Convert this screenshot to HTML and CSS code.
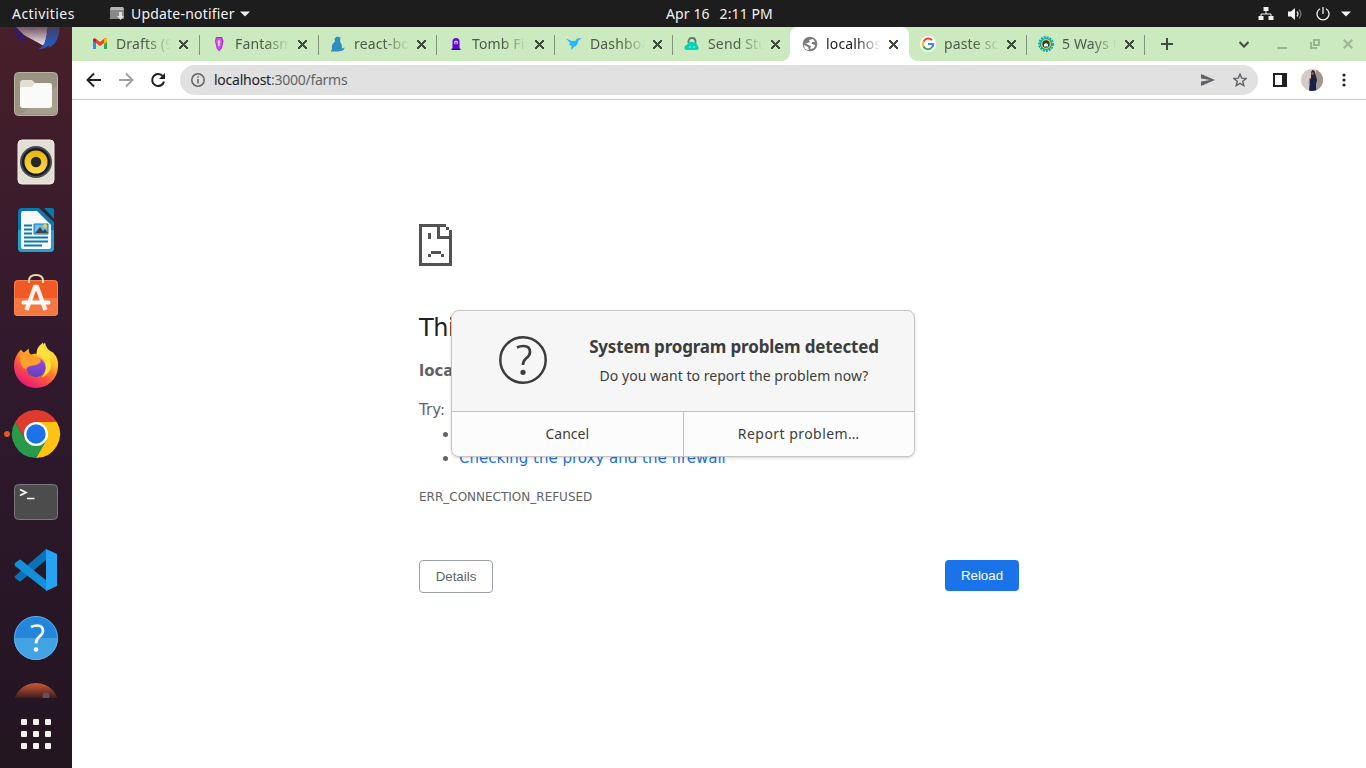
FILE: index.html
```html
<!DOCTYPE html>
<html lang="en">
<head>
<meta charset="utf-8">
<title>localhost</title>
<link rel="stylesheet" href="styles.css">
</head>
<body>
<header class="topbar">
  <span class="activities">Activities</span>
  <svg class="app-icon" width="16" height="16" viewBox="0 0 16 16"><path d="M2 1h12l1 3v9H1V4z" fill="#aaa"/><path d="M1 4h14v9H1z" fill="#888"/><path d="M2 1h12l1 3H1z" fill="#b5b5b5"/><path d="M10 6h3v4h2l-3.500 4L8 10h2z" fill="#ddd"/></svg>
  <span class="app-name">Update-notifier</span>
  <svg class="caret" width="10" height="6" viewBox="0 0 10 6"><path d="M0 .5h10L5 5.500z" fill="#f2f2f2"/></svg>
  <span class="clock"><span>Apr 16</span><span>2:11 PM</span></span>
  <span class="tray">
    <svg width="16" height="14" viewBox="0 0 16 14"><path d="M5.500 0h5v4h-5zM.5 9h5v4h-5zM10.500 9h5v4h-5z" fill="#f2f2f2"/><path d="M8 4v3M3 9V7h10v2" fill="none" stroke="#f2f2f2"/></svg>
    <svg width="16" height="14" viewBox="0 0 16 14"><path d="M1 4.500h3L8 1v12L4 9.500H1z" fill="#f2f2f2"/><path d="M10 4.500q2 2.500 0 5" fill="none" stroke="#ddd" stroke-width="1.300"/><path d="M12 2.500q4 4.500 0 9" fill="none" stroke="#777" stroke-width="1.300"/></svg>
    <svg width="14" height="14" viewBox="0 0 14 14"><path d="M4 1.700a6 6 0 1 0 6 0M7 0v7" fill="none" stroke="#f2f2f2" stroke-width="1.300"/></svg>
    <svg width="10" height="6" viewBox="0 0 10 6"><path d="M0 .5h10L5 5.500z" fill="#f2f2f2"/></svg>
  </span>
</header>
<div class="desktop">
  <nav class="dock">
    <div class="dock-list">
      <svg viewBox="0 0 48 48"><defs><linearGradient id="tb" gradientUnits="userSpaceOnUse" x1="0" y1="24" x2="0" y2="44"><stop stop-color="#6d4c58"/><stop offset="1" stop-color="#f2eef2"/></linearGradient><linearGradient id="tc" gradientUnits="userSpaceOnUse" x1="0" y1="24" x2="0" y2="40"><stop stop-color="#4a3a5c"/><stop offset="1" stop-color="#2c56b4"/></linearGradient></defs><path d="M3 24l9 9 20 11 5-20z" fill="url(#tb)"/><path d="M14 25l6 3 8-3" fill="none" stroke="#75606e"/><path d="M1 26q3 12 13 15-2-3-2-7L3 25z" fill="#301c6c"/><path d="M36 24h11.500q0 17-11 22l1-3q-4 4-11 4 4-2 6-6 3-6 2-12z" fill="url(#tc)"/></svg>
      <svg viewBox="0 0 48 48"><rect x="2.500" y="2.500" width="43" height="43" rx="4" fill="#9a9282" stroke="#b8b3a0"/><path d="M10 44h32l3-3V16z" fill="#a79f8e"/><path d="M8 13q0-3 3-3h9l3 3h14q3 0 3 3v7H8z" fill="#e2dfd3"/><path d="M8 19q0-2 2-2h10l3-4h14q3 0 3 3v19q0 3-3 3H11q-3 0-3-3z" fill="#fafaf9"/></svg>
      <svg viewBox="0 0 48 48"><defs><linearGradient id="ye" x2="0" y2="1"><stop stop-color="#e8b40b"/><stop offset="1" stop-color="#ffdb50"/></linearGradient></defs><rect x="6" y="2" width="36" height="44" rx="4" fill="#e3dfd5" stroke="#f1eee8"/><circle cx="24" cy="24" r="16" fill="#4b4c50"/><circle cx="24" cy="24" r="14" fill="#171c28"/><circle cx="24" cy="24" r="11.500" fill="url(#ye)"/><circle cx="24" cy="24" r="5.200" fill="#252829"/></svg>
      <svg viewBox="0 0 48 48"><path d="M10 2h17l15 14v26q0 4-4 4H10q-4 0-4-4V6q0-4 4-4z" fill="#0878ad"/><path d="M6 24h36v18q0 4-4 4H10q-4 0-4-4z" fill="#279dd0"/><path d="M10 5h15l14 14v22q0 2-2 2H11q-2 0-2-2V7z" fill="#fafafa"/><path d="M32 2h8q2 0 2 2v9z" fill="#0878ad"/><path d="M12 19.500h8M12 23.500h8M12 27.500h8M12 31.500h24M12 35.500h24M12 39.500h18" stroke="#0779b3" stroke-width="2"/><path d="M22 18h14v10H22z" fill="#70bcec" stroke="#0779b3"/><path d="M23 27l5-6 3 4 2-2 3 4z" fill="#444"/><circle cx="33" cy="20" r="2" fill="#f9cf27"/></svg>
      <svg viewBox="0 0 48 48"><path d="M17 9V7q0-6 7-6t7 6v2" fill="none" stroke="#f4d6ad" stroke-width="2"/><rect x="2" y="6" width="44" height="36" rx="4" fill="#f15a24"/><path d="M2 24h44v14q0 4-4 4H6q-4 0-4-4z" fill="#f47840"/><rect x="2.500" y="6.500" width="43" height="35" rx="4" fill="none" stroke="#f58b59" stroke-width=".8"/><path d="M17 9V6M31 9V6" stroke="#f8d8ad" stroke-width="2"/><path d="M14.500 36L23 13h2l8.500 23" fill="none" stroke="#fff1e9" stroke-width="4.300"/><path d="M11.500 28.500h25" stroke="#fff" stroke-width="4" stroke-linecap="round"/></svg>
      <svg viewBox="0 0 48 48"><defs><linearGradient id="ff" x1=".9" x2=".3" y2="1"><stop stop-color="#fff44f"/><stop offset=".35" stop-color="#ffbf25"/><stop offset=".65" stop-color="#ff5b3b"/><stop offset="1" stop-color="#e5147c"/></linearGradient><linearGradient id="pu" x2="0" y2="1"><stop stop-color="#a646e9"/><stop offset="1" stop-color="#5944bb"/></linearGradient></defs><g transform="translate(0 -1.500)"><path d="M9 9q1 2 3 3l5-4q-1 4 2 6 7-2 9 0 1-8 5-12 1 7 8 10 6 6 5 14A22 22 0 0 1 2 25q0-9 7-16z" fill="url(#ff)"/><circle cx="24" cy="27" r="9.700" fill="url(#pu)"/><path d="M8 15q3-3 9 2h6q5 0 6 4-3 4-9 4-5 1-6 4Q7 26 8 15z" fill="#ffa02b"/><path d="M31 2q-8 6-6 13 9 1 9 13-1 6-5 9 9-3 10-12 0-5-3-8 3 0 5 4-1-6-4-9-5-4-6-10z" fill="#ffe13e"/></g></svg>
      <svg class="active" viewBox="0 0 48 48"><path d="M24 12h20.800A24 24 0 0 0 3.200 12l10.400 18L24 24z" fill="#df3a2e"/><path d="M24 12h20.800A24 24 0 0 1 24 48l10.400-18z" fill="#fcc30f"/><path d="M3.200 12A24 24 0 0 0 24 48l10.400-18L24 34 13.600 30z" fill="#299a49"/><circle cx="24" cy="24" r="12" fill="#fff"/><circle cx="24" cy="24" r="9.700" fill="#1a73e8"/></svg>
      <svg viewBox="0 0 48 48"><rect x="2.500" y="6.500" width="43" height="35" rx="4" fill="#4b4c4b" stroke="#797979"/><path d="M8 11.500l6 3-6 3M15 20.500h7.500" fill="none" stroke="#fff" stroke-width="1.700"/></svg>
      <svg viewBox="0 0 48 48"><path d="M3 30L34 3v11L9 35q-1 1-2 0l-4-3q-1-1 0-2z" fill="#0873b7"/><path d="M3 17l4-3q1-1 2 0l26 21v10L3 20q-1-2 0-3z" fill="#148fd9"/><path d="M34 3l11 5v32l-11 5z" fill="#26a4f3"/></svg>
      <svg viewBox="0 0 48 48"><circle cx="24" cy="24" r="22" fill="#2386da"/><path d="M2 26h44a22 22 0 0 1-44 0z" transform="translate(0 -2)" fill="#43a2e3"/><circle cx="24" cy="24" r="21.500" fill="none" stroke="#65b6ee" stroke-width=".8"/><path d="M19 13q3-1.500 6-1.500 6 0 6 5.500 0 3-4 6-3 2.500-3 6.500" fill="none" stroke="#fff" stroke-width="2.700"/><circle cx="24" cy="35.500" r="2.300" fill="#fff"/></svg>
      <svg viewBox="0 0 48 48"><defs><linearGradient id="lo" gradientUnits="userSpaceOnUse" x1="0" y1="2" x2="0" y2="17"><stop stop-color="#c65531"/><stop offset="1" stop-color="#30191d"/></linearGradient></defs><circle cx="24" cy="24" r="23" fill="url(#lo)"/><circle cx="34" cy="14" r="3.500" fill="#645158"/></svg>
    </div>
    <div class="app-grid"><i></i><i></i><i></i><i></i><i></i><i></i><i></i><i></i><i></i></div>
  </nav>
  <section class="browser">
    <div class="tabstrip">
      <div class="tab"><svg viewBox="0 0 16 16"><path d="M1 3v10h3V7l4 3 4-3v6h3V3l-2-1-5 4-5-4z" fill="#ea4335"/><path d="M1 5v8h3V7z" fill="#4285f4"/><path d="M12 7v6h3V5z" fill="#34a853"/><path d="M12 3l3-1v4l-3 2z" fill="#fbbc04"/><path d="M1 3l3 0v4L1 5z" fill="#c5221f"/></svg><span class="label">Drafts (9)</span><b class="close"></b></div>
      <div class="tab shifted"><svg viewBox="0 0 16 16"><path d="M5 1h6l1.500 4-1.500 7-3 3.500L5.500 12 4 5z" fill="#a82ee4"/><path d="M6 2h4l1 3-1 6-2 3-2-4-1-5z" fill="#d84fe0"/><path d="M8 4v6M6.500 6h3" stroke="#fff"/></svg><span class="label">Fantasma</span><b class="close"></b></div>
      <div class="tab"><svg viewBox="0 0 16 16"><path d="M7 .5l3.500 1-.5 4q2.500 3 2 7l3-1-2 3-5 1H1l1-3q-1-4 3-7l-.500-3z" fill="#2d8fbd"/></svg><span class="label">react-boo</span><b class="close"></b></div>
      <div class="tab"><svg viewBox="0 0 16 16"><path d="M4.500 13V5.500q0-3.500 3.500-3.500t3.500 3.500V13z" fill="#6900e8"/><path d="M3.500 12.500h9V14h-9z" fill="#35107b"/><circle cx="8" cy="6.500" r="2" fill="#d8c9ed"/><path d="M8 6v3.500" stroke="#301066"/></svg><span class="label">Tomb Finder</span><b class="close"></b></div>
      <div class="tab"><svg viewBox="0 0 16 16"><path d="M0 2.500l6 2.500 3 0 2-2.500 5-.500-4 3q0 4-4 6l-3 3 .500-4-3-2 2-.500z" fill="#28b6ff"/></svg><span class="label">Dashboard</span><b class="close"></b></div>
      <div class="tab"><svg viewBox="0 0 16 16"><path d="M4.500 7V5.500Q4.500 2 8 2t3.500 3.500V7" fill="none" stroke="#567c71" stroke-width="1.800"/><path d="M4 7.500q2-3 6-1 3 0 3.500 3 3 4.500-1 4.500H3q-4 0-2-4z" fill="#08d2b5"/><path d="M5 11h2m2 0h2" stroke="#8fffe8"/></svg><span class="label">Send Student</span><b class="close"></b></div>
      <div class="tab current"><svg viewBox="0 0 16 16"><circle cx="8" cy="8" r="7.300" fill="#7c7c7c"/><path d="M2 7q3 0 4 2l3 1-1 3q5 0 5-4l-3-1V6h3l-2-3-4 1 1 2-3 1zM2 9q0 5 5 5l-1-3z" fill="#fff"/></svg><span class="label">localhost</span><b class="close"></b></div>
      <div class="tab"><svg viewBox="0 0 16 16"><circle cx="8" cy="8" r="8" fill="#fff"/><path d="M12 4.200A5 5 0 0 0 3.600 5.600" fill="none" stroke="#ea4335" stroke-width="2"/><path d="M3.600 5.500a5 5 0 0 0 0 5" fill="none" stroke="#fbbc05" stroke-width="2"/><path d="M3.500 10.500a5 5 0 0 0 7.500 1.700" fill="none" stroke="#34a853" stroke-width="2"/><path d="M11 12.200q2.300-1.500 2.300-4.200H8" fill="none" stroke="#4285f4" stroke-width="2"/></svg><span class="label">paste screen</span><b class="close"></b></div>
      <div class="tab"><svg viewBox="0 0 16 16"><circle cx="8" cy="8" r="6.900" fill="none" stroke="#00aeb2" stroke-width="2" stroke-dasharray="2 1"/><circle cx="8" cy="8" r="6" fill="#009da5"/><circle cx="8" cy="8" r="4.300" fill="#263d4a" stroke="#f0cc3c" stroke-width="1.300"/><path d="M6 10.500V8.500L8 7l2 1.500v2z" fill="#fff"/></svg><span class="label">5 Ways to</span><b class="close"></b></div>
      <svg class="newtab" width="12" height="12" viewBox="0 0 12 12"><path d="M6 0v12M0 6h12" stroke="#414b3e" stroke-width="2"/></svg>
      <div class="window-controls">
        <svg width="10" height="7" viewBox="0 0 10 7"><path d="M.5 1L5 5.500 9.500 1" fill="none" stroke="#414b3e" stroke-width="2"/></svg>
        <svg width="10" height="10" viewBox="0 0 10 10"><path d="M0 9h10" stroke="#9fb497" stroke-width="2"/></svg>
        <svg width="10" height="10" viewBox="0 0 10 10"><path d="M4 1h5v5H4zM1 3v6h6" fill="none" stroke="#9fb497" stroke-width="2"/></svg>
        <svg width="10" height="10" viewBox="0 0 10 10"><path d="M.7.7l8.600 8.600M9.300.7L.7 9.300" stroke="#9fb497" stroke-width="2"/></svg>
      </div>
    </div>
    <div class="toolbar">
      <svg width="16" height="16" viewBox="0 0 16 16"><path d="M15 8H2M8 1.500L1.500 8 8 14.500" fill="none" stroke="#202124" stroke-width="1.900"/></svg>
      <svg width="16" height="16" viewBox="0 0 16 16"><path d="M1 8h13M8 1.500L14.500 8 8 14.500" fill="none" stroke="#a0a0a0" stroke-width="1.900"/></svg>
      <svg width="16" height="16" viewBox="0 0 16 16"><path d="M13 4.500A6 6 0 1 0 14 9.500" fill="none" stroke="#202124" stroke-width="2"/><path d="M15 1v6H9z" fill="#202124"/></svg>
      <div class="omnibox">
        <svg width="14" height="14" viewBox="0 0 14 14"><circle cx="7" cy="7" r="6.200" fill="none" stroke="#5f6368" stroke-width="1.500"/><path d="M7 6v4.500M7 3.300v1.500" stroke="#5f6368" stroke-width="1.500"/></svg>
        <span class="url">localhost<em>:3000/farms</em></span>
        <svg width="14" height="12" viewBox="0 0 14 12"><path d="M0 0l14 6-14 6V7.500L9 6 0 4.500z" fill="#5f6368"/></svg>
        <svg width="14" height="14" viewBox="0 0 14 14"><path d="M7 1l1.700 4.100 4.500.3-3.500 2.800 1.100 4.400L7 10.300l-3.800 2.300 1.100-4.400L.8 5.400l4.500-.3z" fill="none" stroke="#5f6368" stroke-width="1.400"/></svg>
      </div>
      <svg class="panel" width="14" height="14" viewBox="0 0 14 14"><path d="M1 1h12v12H1z" fill="#fff" stroke="#202124" stroke-width="2"/><path d="M9 1h4v12H9z" fill="#202124"/></svg>
      <svg class="avatar" width="22" height="22" viewBox="0 0 22 22"><defs><clipPath id="av"><circle cx="11" cy="11" r="11"/></clipPath></defs><g clip-path="url(#av)"><path d="M0 0h22v22H0z" fill="#d6cac4"/><path d="M15 0h7v22h-7z" fill="#a3968c"/><path d="M10 3q2-4 4 0l2 8-1 4h-5z" fill="#2b2530"/><path d="M9 10l2-2 4 2v10l1 2H8z" fill="#171f4e"/><path d="M9 9l-1 5 1 2" fill="none" stroke="#a97a68"/><circle cx="11.500" cy="4.500" r="1.300" fill="#9b6a58"/></g></svg>
      <svg class="menu" width="4" height="14" viewBox="0 0 4 14"><g fill="#202124"><circle cx="2" cy="2" r="1.600"/><circle cx="2" cy="7" r="1.600"/><circle cx="2" cy="12" r="1.600"/></g></svg>
    </div>
    <main class="page">
      <svg class="sad" width="33" height="42" viewBox="0 0 33 42" shape-rendering="crispEdges"><path d="M0 0h27v3h-6v9h9V6h3v36H0zM3 3v36h27V15H18V3z" fill="#535353" fill-rule="evenodd"/><path d="M27 3h3v3h-3zM9 9h3v6H9zM12 27h10v3H12zM9 30h3v3H9zM22 30h3v3h-3z" fill="#535353"/></svg>
      <h1>This site can’t be reached</h1>
      <p class="summary"><strong>localhost</strong> refused to connect.</p>
      <p class="try">Try:</p>
      <ul><li>Checking the connection</li><li><a>Checking the proxy and the firewall</a></li></ul>
      <p class="code">ERR_CONNECTION_REFUSED</p>
      <div class="buttons"><button class="details">Details</button><button class="reload">Reload</button></div>
    </main>
  </section>
</div>
<div class="dialog" role="dialog">
  <div class="dialog-body">
    <svg width="48" height="48" viewBox="0 0 48 48"><circle cx="24" cy="24" r="22.700" fill="none" stroke="#3d3d3d" stroke-width="2.500"/><path d="M18 11.500q3-1.500 6.500-1.500 6.500 0 6.500 6 0 3.500-4 6.500-3 2.500-3 6.500" fill="none" stroke="#3d3d3d" stroke-width="2.700"/><circle cx="24" cy="36.300" r="2.600" fill="#3d3d3d"/></svg>
    <div class="message"><h2>System program problem detected</h2><p>Do you want to report the problem now?</p></div>
  </div>
  <div class="dialog-actions"><button>Cancel</button><button><span class="report">Report problem…</span></button></div>
</div>
</body>
</html>
```
FILE: styles.css
```css
* { box-sizing: border-box; }
body { margin: 0; width: 1366px; height: 768px; overflow: hidden; background: #fff; font-family: "Noto Sans", sans-serif; display: flex; flex-direction: column; }
h1, h2, p, ul { margin: 0; }
svg { display: block; flex: none; }

.topbar { height: 27px; flex: none; background: #1d1d1d; color: #f2f2f2; display: flex; align-items: center; padding: 0 15px 0 12px; font-size: 14px; line-height: 27px; }
.activities { width: 97px; letter-spacing: .45px; }
.app-name { margin-left: 6px; width: 104px; white-space: nowrap; letter-spacing: .2px; }
.caret { margin-left: 5px; }
.clock { margin-left: 416px; display: flex; gap: 10px; white-space: nowrap; letter-spacing: .1px; }
.tray { margin-left: auto; display: flex; align-items: center; gap: 13px; }
.tray svg:last-child { margin-left: -2px; }

.desktop { flex: 1; display: flex; min-height: 0; }
.dock { width: 72px; flex: none; background: linear-gradient(#481f29 0, #381b2c 30%, #2d182c 55%, #231520 100%); display: flex; flex-direction: column; align-items: center; }
.dock-list { width: 72px; height: 671px; overflow: hidden; display: flex; flex-direction: column; align-items: center; gap: 20px; }
.dock-list svg { width: 48px; height: 48px; }
.dock-list svg:first-child { margin-top: -25px; }
.dock-list .active { width: 72px; background: radial-gradient(circle at 7px 24px, #e95420 2.500px, transparent 3.500px); }
.app-grid { margin-top: 21px; display: grid; grid-template-columns: repeat(3, 6px); gap: 6px; }
.app-grid i { width: 6px; height: 6px; border-radius: 1px; background: #f3f1ed; }

.browser { flex: 1; min-width: 0; display: flex; flex-direction: column; }
.tabstrip { height: 34px; flex: none; background: #cbeabf; display: flex; align-items: center; padding-left: 10px; padding-right: 13px; }
.tab { position: relative; width: 118px; height: 34px; flex: none; display: flex; align-items: center; padding-left: 11px; color: #50594c; font-size: 14px; }
.tab:first-child { padding-left: 10px; margin-right: 1px; }
.tab.shifted { padding-left: 10px; }
.tab.shifted .close { margin-left: 8px; }
.tab > svg { width: 16px; height: 16px; }
.tab::after { content: ""; position: absolute; right: 0; top: 8px; width: 1px; height: 20px; background: #819479; }
.tab.current::after, .tab:has(+ .current)::after { display: none; }
.label { margin-left: 8px; width: 55px; overflow: hidden; white-space: nowrap; line-height: 20px; letter-spacing: .15px; -webkit-mask-image: linear-gradient(90deg, #000 55%, transparent); mask-image: linear-gradient(90deg, #000 55%, transparent); }
.close { width: 9px; height: 9px; margin-left: 8px; background: linear-gradient(45deg, transparent 43%, #414b3e 44% 56%, transparent 57%), linear-gradient(-45deg, transparent 43%, #414b3e 44% 56%, transparent 57%); }
.tab.current { background: #fff; color: #202124; border-radius: 8px 8px 0 0; width: 119px; margin-left: -1px; padding-left: 12px; }
.current::before { content: ""; position: absolute; left: -8px; right: -8px; bottom: 0; height: 8px; background: radial-gradient(circle at 0 0, transparent 7.500px, #fff 8px) left / 8px 8px no-repeat, radial-gradient(circle at 100% 0, transparent 7.500px, #fff 8px) right / 8px 8px no-repeat; }
.newtab { margin-left: 16px; }
.window-controls { margin-left: auto; display: flex; align-items: center; gap: 23px; }
.window-controls svg:nth-child(2) { margin-left: 5px; }

.toolbar { height: 39px; flex: none; border-bottom: 1px solid #c8c8c8; display: flex; align-items: center; padding: 0 20px 0 14px; gap: 16px; }
.omnibox { width: 1078px; flex: none; height: 30px; margin-left: -2px; border-radius: 15px; background: #e1e1e1; display: flex; align-items: center; padding: 0 11px; }
.url { flex: 1; margin-left: 9px; font-size: 14px; line-height: 18px; margin-bottom: 1px; letter-spacing: -.25px; color: #202124; }
.url em { font-style: normal; color: #5f6368; }
.omnibox svg:last-child { margin-left: 18px; }
.panel { margin-left: -1px; }
.avatar { margin-left: -2px; }
.menu { margin-left: 3px; margin-right: -4px; }

.page { width: 947px; padding: 124px 0 0 347px; color: #5f6368; font-family: "DejaVu Sans", sans-serif; font-size: 15px; }
.page h1 { margin-top: 45px; font-size: 24px; line-height: 34px; font-weight: 400; letter-spacing: -.4px; color: #202124; }
.summary { margin-top: 16px; line-height: 20px; }
.try { margin-top: 19px; line-height: 20px; }
.page ul { margin-top: 2px; padding-left: 40px; line-height: 24px; }
.page a { color: #1a73e8; }
.code { margin-top: 18px; font-size: 12px; line-height: 18px; }
.buttons { margin-top: 54px; display: flex; justify-content: space-between; align-items: flex-start; }
.buttons button { width: 74px; border-radius: 4px; font: 13.330px "Liberation Sans", sans-serif; padding: 0; }
.details { height: 33px; border: 1px solid #9aa0a6; background: #fff; color: #5f6368; }
.reload { height: 31px; border: 0; background: #1a73e8; color: #fff; }

.dialog { position: absolute; left: 451px; top: 310px; width: 464px; height: 147px; border: 1px solid #c5c5c5; border-radius: 8px; background: #f6f6f6; overflow: hidden; color: #3d3d3d; box-shadow: 0 1px 3px rgba(0,0,0,.18); display: flex; flex-direction: column; }
.dialog-body { height: 100px; display: flex; padding: 25px 0 0 47px; }
.message { width: 290px; margin-left: 42px; text-align: center; white-space: nowrap; }
.message h2 { font-size: 17px; line-height: 22px; font-weight: 700; letter-spacing: -.17px; }
.message p { margin-top: 8px; font-size: 14px; line-height: 20px; letter-spacing: .04px; }
.dialog-actions { flex: 1; display: flex; border-top: 1px solid #c1c1c1; }
.dialog-actions button { flex: 1; border: 0; padding: 0 0 2px; background: #fcfcfc; color: #3d3d3d; font: 14px "Noto Sans", sans-serif; }
.dialog-actions button + button { border-left: 1px solid #c1c1c1; }
.report { letter-spacing: .45px; }
```
